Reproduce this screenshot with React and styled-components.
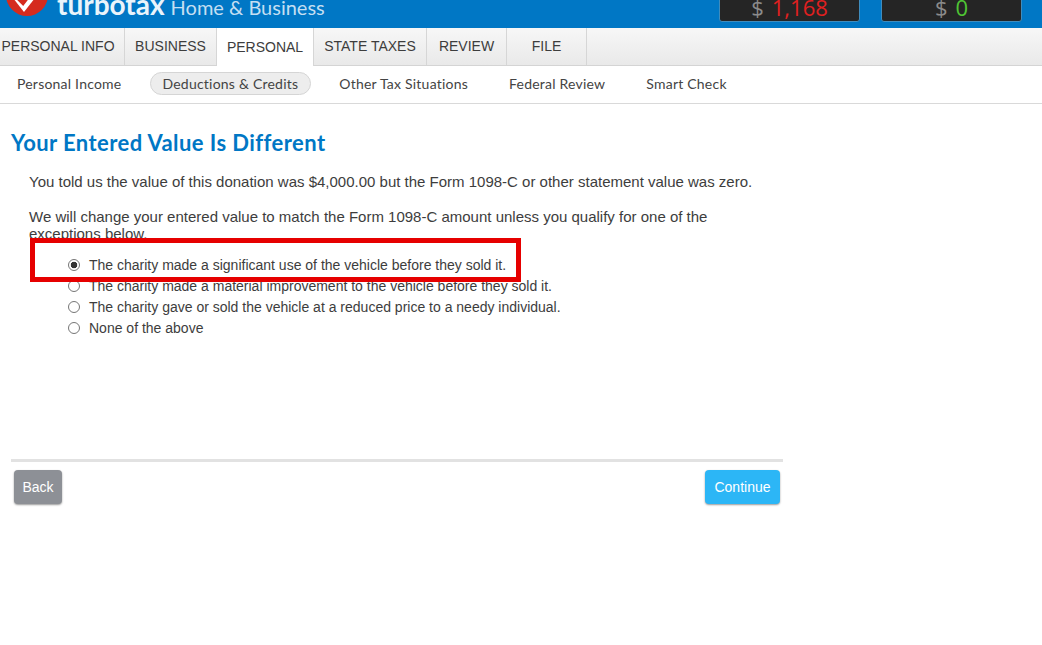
import React from "react";
import styled, { createGlobalStyle } from "styled-components";

const topTabs = [
  { label: "PERSONAL INFO", width: 125, inset: 8 },
  { label: "BUSINESS", width: 92 },
  { label: "PERSONAL", width: 97, active: true },
  { label: "STATE TAXES", width: 113 },
  { label: "REVIEW", width: 80 },
  { label: "FILE", width: 80 },
];

const subTabs = [
  { label: "Personal Income" },
  { label: "Deductions & Credits", active: true },
  { label: "Other Tax Situations" },
  { label: "Federal Review" },
  { label: "Smart Check" },
];

const options = [
  { label: "The charity made a significant use of the vehicle before they sold it.", checked: true },
  { label: "The charity made a material improvement to the vehicle before they sold it." },
  { label: "The charity gave or sold the vehicle at a reduced price to a needy individual." },
  { label: "None of the above" },
];

const App = () => (
  <Page>
    <GlobalStyle />
    <Header>
      <Brand>
        <LogoMark viewBox="0 0 42 42">
          <circle cx="21" cy="21" r="21" fill="#d52b1e" />
          <path d="M18 38 L7 24 L9 10 L33 10 L29 24 Z" fill="#fff" />
          <path d="M12 24 L17 29 L30 12" fill="none" stroke="#d52b1e" strokeWidth="4" />
        </LogoMark>
        <BrandName>turbotax</BrandName>
        <Edition>Home &amp; Business</Edition>
      </Brand>
      <Balances>
        <Balance>
          <Dollar>$</Dollar>
          <Amount $color="#e02020">1,168</Amount>
        </Balance>
        <Balance>
          <Dollar>$</Dollar>
          <Amount $color="#4fc534">0</Amount>
        </Balance>
      </Balances>
    </Header>
    <TopNav>
      {topTabs.map((tab) => (
        <TopTab key={tab.label} $width={tab.width} $active={tab.active} $inset={tab.inset}>
          {tab.label}
        </TopTab>
      ))}
    </TopNav>
    <SubNav>
      {subTabs.map((tab) => (
        <SubTab key={tab.label} $active={tab.active}>
          {tab.label}
        </SubTab>
      ))}
    </SubNav>
    <Main>
      <Title>Your Entered Value Is Different</Title>
      <Body>
        <Paragraph>
          You told us the value of this donation was $4,000.00 but the Form 1098-C or other statement value was zero.
        </Paragraph>
        <Paragraph>
          We will change your entered value to match the Form 1098-C amount unless you qualify for one of the exceptions below.
        </Paragraph>
        <Options>
          {options.map((option) => (
            <Option key={option.label}>
              <Radio type="radio" name="exception" defaultChecked={option.checked} />
              {option.label}
            </Option>
          ))}
          <Highlight />
        </Options>
      </Body>
      <Footer>
        <BackButton>Back</BackButton>
        <ContinueButton>Continue</ContinueButton>
      </Footer>
    </Main>
  </Page>
);

const GlobalStyle = createGlobalStyle`
  html, body {
    margin: 0;
    padding: 0;
    background: #fff;
  }
`;

const Page = styled.div`
  width: 1042px;
  height: 645px;
  overflow: hidden;
  font-family: "Liberation Sans", Arial, sans-serif;
  color: #3d3d3d;
`;

const Header = styled.header`
  height: 28px;
  background: #0077c5;
  display: flex;
  justify-content: space-between;
  align-items: flex-end;
  overflow: hidden;
`;

const Brand = styled.div`
  display: flex;
  align-items: flex-end;
  padding-left: 6px;
`;

const LogoMark = styled.svg`
  width: 42px;
  height: 42px;
  margin-bottom: 12px;
  flex: none;
`;

const BrandName = styled.span`
  margin-left: 9px;
  margin-bottom: 9px;
  font-family: Lato, sans-serif;
  font-size: 28px;
  line-height: 30px;
  font-weight: 700;
  color: #eaf4fb;
`;

const Edition = styled.span`
  margin-left: 6px;
  margin-bottom: 8px;
  font-family: Lato, sans-serif;
  font-size: 20px;
  line-height: 26px;
  color: #c4dff2;
`;

const Balances = styled.div`
  display: flex;
  gap: 21px;
  padding-right: 20px;
  margin-bottom: 6px;
`;

const Balance = styled.div`
  width: 141px;
  height: 40px;
  box-sizing: border-box;
  background: #252525;
  border: 1px solid #3f8cbd;
  border-radius: 3px;
  display: flex;
  justify-content: center;
  align-items: flex-end;
  gap: 8px;
  font-family: "Open Sans", sans-serif;
  font-size: 22px;
  line-height: 28px;
`;

const Dollar = styled.span`
  color: #8b8b8b;
`;

const Amount = styled.span`
  color: ${(p) => p.$color};
`;

const TopNav = styled.nav`
  height: 38px;
  box-sizing: border-box;
  display: flex;
  background: linear-gradient(#f7f7f7, #e9e9e9);
  border-bottom: 1px solid #d4d4d4;
`;

const TopTab = styled.div`
  width: ${(p) => p.$width}px;
  box-sizing: border-box;
  padding-right: ${(p) => p.$inset || 0}px;
  text-align: center;
  font-size: 14px;
  line-height: ${(p) => (p.$active ? "39px" : "36px")};
  border-right: 1px solid #d6d6d6;
  background: ${(p) => (p.$active ? "#fff" : "transparent")};
  height: ${(p) => (p.$active ? "38px" : "37px")};
  white-space: nowrap;
`;

const SubNav = styled.nav`
  height: 38px;
  box-sizing: border-box;
  display: flex;
  align-items: center;
  gap: 16px;
  padding: 0 0 3px 4.5px;
  border-bottom: 1px solid #d9d9d9;
`;

const SubTab = styled.div`
  padding: 0 11.5px;
  height: 23px;
  box-sizing: border-box;
  line-height: 21px;
  font-family: Lato, sans-serif;
  font-size: 14px;
  letter-spacing: 0.22px;
  white-space: nowrap;
  color: #444;
  border-radius: 12px;
  border: 1px solid ${(p) => (p.$active ? "#d5d5d5" : "transparent")};
  background: ${(p) => (p.$active ? "#ededed" : "transparent")};
`;

const Main = styled.main`
  width: 772px;
  margin-left: 11px;
`;

const Title = styled.h1`
  margin: 24px 0 0;
  font-family: Lato, sans-serif;
  font-size: 22px;
  line-height: 30px;
  font-weight: 700;
  letter-spacing: 0.42px;
  color: #0077c5;
`;

const Body = styled.div`
  padding-left: 18px;
  padding-top: 15px;
`;

const Paragraph = styled.p`
  margin: 0 0 18px;
  width: 730px;
  font-size: 15px;
  line-height: 17px;
`;

const Options = styled.div`
  position: relative;
  margin-top: -6px;
  padding-left: 39px;
`;

const Option = styled.label`
  display: flex;
  align-items: center;
  height: 21px;
  font-size: 14px;
  white-space: nowrap;
`;

const Radio = styled.input`
  appearance: none;
  width: 12px;
  height: 12px;
  box-sizing: border-box;
  margin: 0 9px 0 0;
  flex: none;
  border: 1px solid #767676;
  border-radius: 50%;
  background: #fff;

  &:checked {
    background: radial-gradient(circle, #333 0 3px, #fff 3.6px);
  }
`;

const Highlight = styled.div`
  position: absolute;
  left: 1px;
  top: -16px;
  width: 491px;
  height: 44px;
  box-sizing: border-box;
  border: 5px solid #e60000;
  pointer-events: none;
`;

const Footer = styled.footer`
  margin-top: 121px;
  border-top: 3px solid #e2e2e2;
  padding: 8px 3px 0;
  display: flex;
  justify-content: space-between;
`;

const ActionButton = styled.button`
  height: 34px;
  border: 0;
  border-radius: 4px;
  color: #fff;
  font-family: "Liberation Sans", Arial, sans-serif;
  font-size: 14px;
  padding: 0;
  box-shadow: 0 1px 2px rgba(0, 0, 0, 0.4);
`;

const BackButton = styled(ActionButton)`
  width: 48px;
  background: #8d9096;
`;

const ContinueButton = styled(ActionButton)`
  width: 75px;
  background: #2cb6f6;
`;

export default App;
